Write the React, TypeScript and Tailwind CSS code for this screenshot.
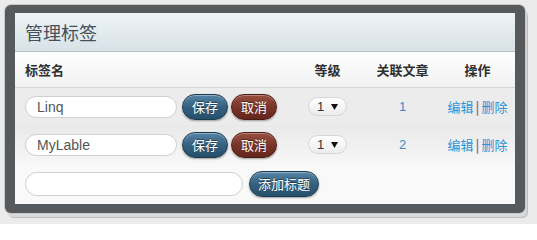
import { useState } from "react";

type Tag = { id: number; name: string; level: number; count: number };

const cjk = "font-['Noto_Sans_CJK_SC','Liberation_Sans',sans-serif]";
const latin = "font-['Liberation_Sans','Noto_Sans_CJK_SC',sans-serif]";

const blueBtn =
  "rounded-full border border-[#1c3a4f] bg-gradient-to-b from-[#5585a6] via-[#35617f] to-[#24506c] text-white [text-shadow:0_-1px_0_rgba(0,0,0,0.4)] shadow-[inset_0_1px_0_rgba(255,255,255,0.35),0_1px_2px_rgba(0,0,0,0.35)]";
const redBtn =
  "rounded-full border border-[#4d1c14] bg-gradient-to-b from-[#98503f] via-[#7a3529] to-[#64261c] text-white [text-shadow:0_-1px_0_rgba(0,0,0,0.4)] shadow-[inset_0_1px_0_rgba(255,255,255,0.3),0_1px_2px_rgba(0,0,0,0.35)]";

const App = () => {
  const [tags] = useState<Tag[]>([
    { id: 1, name: "Linq", level: 1, count: 1 },
    { id: 2, name: "MyLable", level: 1, count: 2 },
  ]);

  return (
    <div className="w-[537px] h-[224px] bg-[#ebebeb] pt-[5px] pl-[5px] overflow-hidden">
      <div className="w-[520px] h-[208px] rounded-[6px] bg-[#565a5d] pt-[8px] pl-[10px] pr-[10px] pb-[9px] shadow-[0_0_0_1px_#c9c9c9,2px_4px_0_#dadada,3px_5px_0_#bdbdbd]">
        <div className="flex flex-col h-full bg-white">
          <div className="h-[39px] flex items-center px-[10px] bg-gradient-to-b from-[#eef3f6] to-[#d8e2e7] border-b border-[#b2bcc2]">
            <h1 className={`${cjk} text-[18px] text-[#43515b]`}>管理标签</h1>
          </div>

          <div
            className={`${cjk} h-[36px] grid grid-cols-[280px_65px_85px_65px] items-center bg-gradient-to-b from-white to-[#f1f1f1] border-b border-[#d4d4d4] text-[13px] font-bold text-[#2f2f2f]`}
          >
            <div className="pl-[10px]">标签名</div>
            <div className="text-center">等级</div>
            <div className="text-center">关联文章</div>
            <div className="text-center">操作</div>
          </div>

          {tags.map((tag, i) => (
            <div
              key={tag.id}
              className={`grid grid-cols-[280px_65px_85px_65px] items-center ${
                i === 0
                  ? "h-[37px] bg-[#ececec]"
                  : "h-[39px] bg-gradient-to-b from-[#e9e9e9] to-[#f7f7f7]"
              }`}
            >
              <div className="flex items-center pl-[10px]">
                <input
                  defaultValue={tag.name}
                  className={`${latin} w-[152px] h-[22px] rounded-full border border-[#d0d0d0] bg-white px-[11px] text-[14px] text-[#555] outline-none`}
                />
                <button className={`${cjk} ${blueBtn} ml-[5px] w-[46px] h-[26px] text-[13px]`}>
                  保存
                </button>
                <button className={`${cjk} ${redBtn} ml-[3px] w-[46px] h-[26px] text-[13px]`}>
                  取消
                </button>
              </div>
              <div className="flex justify-center">
                <div
                  className={`${latin} w-[39px] h-[19px] flex items-center justify-center gap-[7px] rounded-full border border-[#d6d6d6] bg-gradient-to-b from-white to-[#ececec] text-[13px] text-[#333]`}
                >
                  <span>{tag.level}</span>
                  <svg width="7" height="7" viewBox="0 0 7 7">
                    <polygon points="0,1 7,1 3.5,7" fill="#111" />
                  </svg>
                </div>
              </div>
              <div className={`${latin} text-center text-[13px] text-[#3a8bc8]`}>{tag.count}</div>
              <div className={`${cjk} flex justify-center items-center text-[13px] text-[#2d93d6]`}>
                <a href="#">编辑</a>
                <span className="mx-[2px] text-[#8c6d8c] font-bold">|</span>
                <a href="#">删除</a>
              </div>
            </div>
          ))}

          <div className="flex-1 flex items-center pl-[10px] bg-[#f9f9f9]">
            <input
              className={`${latin} w-[218px] h-[24px] rounded-full border border-[#d0d0d0] bg-white px-[10px] text-[14px] outline-none`}
            />
            <button className={`${cjk} ${blueBtn} ml-[6px] w-[70px] h-[26px] text-[13px]`}>
              添加标题
            </button>
          </div>
        </div>
      </div>
    </div>
  );
};

export default App;
